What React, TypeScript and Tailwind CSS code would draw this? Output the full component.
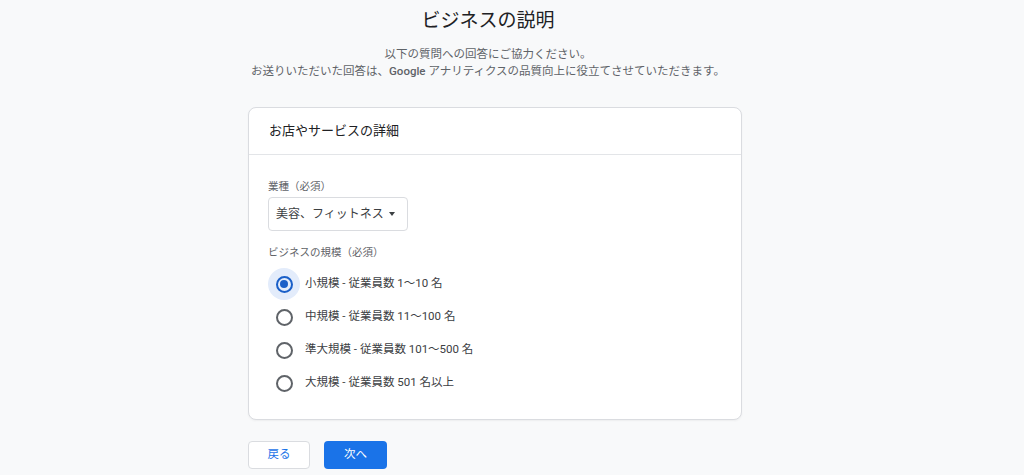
import { useState } from "react";

const sizes = [
  "小規模 - 従業員数 1〜10 名",
  "中規模 - 従業員数 11〜100 名",
  "準大規模 - 従業員数 101〜500 名",
  "大規模 - 従業員数 501 名以上",
];

const Radio = ({ checked }: { checked: boolean }) => (
  <span
    className={`flex h-[32px] w-[32px] items-center justify-center rounded-full ${
      checked ? "bg-[#e3ecfb]" : ""
    }`}
  >
    <span
      className={`flex h-[17px] w-[17px] items-center justify-center rounded-full border-2 ${
        checked ? "border-[#1a5fc8]" : "border-[#5f6368]"
      }`}
    >
      {checked && <span className="h-[8px] w-[8px] rounded-full bg-[#1a5fc8]" />}
    </span>
  </span>
);

export default function App() {
  const [size, setSize] = useState(0);

  return (
    <div
      className="min-h-[475px] bg-[#f8f9fa] pt-[7px] text-[#202124]"
      style={{ fontFamily: 'Roboto, "Noto Sans CJK JP", sans-serif' }}
    >
      <div className="ml-[248px] w-[494px]">
        {/* Heading */}
        <div className="pr-[14px] text-center">
          <h1 className="text-[19px] leading-[28px] text-[#202124]">ビジネスの説明</h1>
          <p className="mt-[11px] text-[11.5px] leading-[17px] text-[#5f6368]">
            以下の質問への回答にご協力ください。
            <br />
            お送りいただいた回答は、<span className="font-medium">Google</span> アナリティクスの品質向上に役立てさせていただきます。
          </p>
        </div>

        {/* Card */}
        <div className="mt-[27px] rounded-lg border border-[#dadce0] bg-white shadow-[0_1px_2px_rgba(60,64,67,0.06)]">
          <div className="flex h-[47px] items-center border-b border-[#e3e5e8] px-[20px] text-[13px]">
            お店やサービスの詳細
          </div>
          <div className="px-[19px] pb-[20px] pt-[24px]">
            <div className="text-[10.5px] leading-[16px] text-[#5f6368]">業種（必須）</div>
            <button className="mt-[2px] flex h-[34px] w-[140px] items-center gap-[5px] rounded border border-[#dadce0] px-[7px] text-[12px] text-[#3c4043]">
              美容、フィットネス
              <span className="h-0 w-0 border-x-[3.5px] border-t-[4px] border-x-transparent border-t-[#3c4043]" />
            </button>
            <div className="mt-[14px] text-[10.5px] leading-[16px] text-[#5f6368]">
              ビジネスの規模（必須）
            </div>
            <div className="mt-[7px] flex flex-col gap-[1px]">
              {sizes.map((s, i) => (
                <label
                  key={s}
                  className="flex h-[32px] cursor-pointer items-center gap-[5px] text-[11.5px] text-[#3c4043]"
                  onClick={() => setSize(i)}
                >
                  <Radio checked={size === i} />
                  {s}
                </label>
              ))}
            </div>
          </div>
        </div>

        {/* Actions */}
        <div className="mt-[21px] flex gap-[14px]">
          <button className="h-[28px] w-[62px] rounded border border-[#dadce0] bg-white text-[11.5px] text-[#1a73e8]">
            戻る
          </button>
          <button className="h-[28px] w-[63px] rounded bg-[#1a73e8] text-[11.5px] text-white">
            次へ
          </button>
        </div>
      </div>
    </div>
  );
}
